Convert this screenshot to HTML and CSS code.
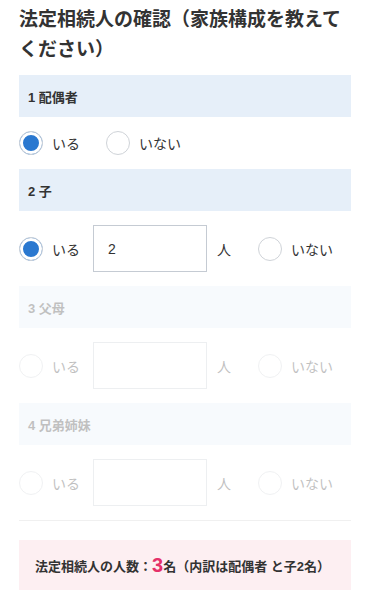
FILE: index.html
```html
<!DOCTYPE html>
<html lang="ja">
<head>
    <meta charset="UTF-8">
    <meta name="viewport" content="width=device-width, initial-scale=1.0">
    <title>法定相続人の確認</title>
    <link rel="stylesheet" href="styles.css">
</head>
<body>
    <div class="container">
        <h2 class="title">法定相続人の確認（家族構成を教えてください）</h2>

        <div class="section">
            <div class="section-head">1 配偶者</div>
            <div class="answer">
                <label class="choice"><input type="radio" name="spouse" checked><span>いる</span></label>
                <label class="choice gap-wide"><input type="radio" name="spouse"><span>いない</span></label>
            </div>
        </div>

        <div class="section">
            <div class="section-head">2 子</div>
            <div class="answer">
                <label class="choice"><input type="radio" name="child" checked><span>いる</span></label>
                <input class="count" type="text" value="2">
                <span class="unit">人</span>
                <label class="choice"><input type="radio" name="child"><span>いない</span></label>
            </div>
        </div>

        <div class="section disabled">
            <div class="section-head">3 父母</div>
            <div class="answer">
                <label class="choice"><input type="radio" name="parent" disabled><span>いる</span></label>
                <input class="count" type="text" disabled>
                <span class="unit">人</span>
                <label class="choice"><input type="radio" name="parent" disabled><span>いない</span></label>
            </div>
        </div>

        <div class="section disabled">
            <div class="section-head">4 兄弟姉妹</div>
            <div class="answer">
                <label class="choice"><input type="radio" name="sibling" disabled><span>いる</span></label>
                <input class="count" type="text" disabled>
                <span class="unit">人</span>
                <label class="choice"><input type="radio" name="sibling" disabled><span>いない</span></label>
            </div>
        </div>

        <div class="divider"></div>

        <div class="result">
            法定相続人の人数：<span class="result-num">3</span>名（内訳は配偶者 と子2名）
        </div>
    </div>
</body>
</html>
```

FILE: styles.css
```css
body {
    font-family: "Liberation Sans", "Noto Sans CJK JP", sans-serif;
    margin: 0;
    padding: 0;
    background-color: #fff;
    color: #333;
}

.container {
    padding: 5px 19px 0;
}

.title {
    margin: 0 0 10px;
    font-size: 19px;
    line-height: 30px;
    font-weight: bold;
    color: #333;
}

.section-head {
    height: 42px;
    display: flex;
    align-items: center;
    padding-left: 9px;
    background-color: #e6eff9;
    font-size: 13px;
    font-weight: bold;
}

.answer {
    display: flex;
    align-items: center;
    padding: 14px 0;
    font-size: 14px;
}

.choice {
    display: flex;
    align-items: center;
    gap: 9px;
}

.choice input {
    appearance: none;
    -webkit-appearance: none;
    margin: 0;
    width: 24px;
    height: 24px;
    border: 1px solid #cfd3d8;
    border-radius: 50%;
    background: #fff;
    box-sizing: border-box;
}

.choice input:checked {
    background: #2a78d0;
    box-shadow: inset 0 0 0 3px #fff;
}

.gap-wide {
    margin-left: 26px;
}

.count {
    width: 114px;
    height: 47px;
    box-sizing: border-box;
    margin-left: 13px;
    padding: 0 14px;
    border: 1px solid #c5cbd3;
    border-radius: 0;
    font-family: inherit;
    font-size: 14px;
    color: #333;
    background: #fff;
}

.count:disabled {
    background: #fff;
}

.unit {
    margin-left: 10px;
    margin-right: 27px;
}

.disabled {
    opacity: 0.3;
}

.divider {
    height: 1px;
    background-color: #f0f0f0;
}

.result {
    margin-top: 19px;
    height: 50px;
    display: flex;
    align-items: center;
    padding-left: 16px;
    background-color: #fdeff2;
    font-size: 13px;
    font-weight: bold;
}

.result-num {
    color: #e5306a;
    font-size: 20px;
}
```
